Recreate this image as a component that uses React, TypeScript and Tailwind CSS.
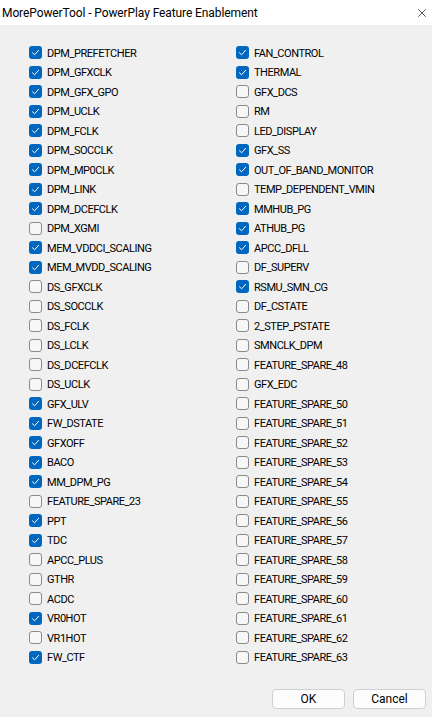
import { X } from "lucide-react"

const leftFeatures: [string, boolean][] = [
  ["DPM_PREFETCHER", true],
  ["DPM_GFXCLK", true],
  ["DPM_GFX_GPO", true],
  ["DPM_UCLK", true],
  ["DPM_FCLK", true],
  ["DPM_SOCCLK", true],
  ["DPM_MP0CLK", true],
  ["DPM_LINK", true],
  ["DPM_DCEFCLK", true],
  ["DPM_XGMI", false],
  ["MEM_VDDCI_SCALING", true],
  ["MEM_MVDD_SCALING", true],
  ["DS_GFXCLK", false],
  ["DS_SOCCLK", false],
  ["DS_FCLK", false],
  ["DS_LCLK", false],
  ["DS_DCEFCLK", false],
  ["DS_UCLK", false],
  ["GFX_ULV", true],
  ["FW_DSTATE", true],
  ["GFXOFF", true],
  ["BACO", true],
  ["MM_DPM_PG", true],
  ["FEATURE_SPARE_23", false],
  ["PPT", true],
  ["TDC", true],
  ["APCC_PLUS", false],
  ["GTHR", false],
  ["ACDC", false],
  ["VR0HOT", true],
  ["VR1HOT", false],
  ["FW_CTF", true],
]

const rightFeatures: [string, boolean][] = [
  ["FAN_CONTROL", true],
  ["THERMAL", true],
  ["GFX_DCS", false],
  ["RM", false],
  ["LED_DISPLAY", false],
  ["GFX_SS", true],
  ["OUT_OF_BAND_MONITOR", true],
  ["TEMP_DEPENDENT_VMIN", false],
  ["MMHUB_PG", true],
  ["ATHUB_PG", true],
  ["APCC_DFLL", true],
  ["DF_SUPERV", false],
  ["RSMU_SMN_CG", true],
  ["DF_CSTATE", false],
  ["2_STEP_PSTATE", false],
  ["SMNCLK_DPM", false],
  ["FEATURE_SPARE_48", false],
  ["GFX_EDC", false],
  ...Array.from({ length: 14 }, (_, i) => [`FEATURE_SPARE_${50 + i}`, false] as [string, boolean]),
]

function CheckRow({ label, checked }: { label: string; checked: boolean }) {
  return (
    <label className="flex items-center h-[19.5px] gap-[5px]">
      {checked ? (
        <span className="w-[13px] h-[13px] rounded-[3px] bg-[#0067c0] flex items-center justify-center">
          <svg width="9" height="9" viewBox="0 0 9 9" fill="none">
            <path d="M1.5 4.8 L3.6 6.8 L7.6 2.3" stroke="white" strokeWidth="1" strokeLinecap="round" strokeLinejoin="round" />
          </svg>
        </span>
      ) : (
        <span className="w-[13px] h-[13px] rounded-[3px] border border-[#8a8a8a] bg-[#f7f7f7]" />
      )}
      <span className="text-[11px] text-black tracking-[-0.45px] leading-none pt-[1px]">{label}</span>
    </label>
  )
}

export default function App() {
  return (
    <div className="w-[432px] h-[717px] bg-[#f0f0f0] flex flex-col" style={{ fontFamily: "Roboto, 'Liberation Sans', sans-serif" }}>
      {/* Title bar */}
      <div className="h-[25px] bg-white flex items-center justify-between pl-[2px] pr-[3px]">
        <span className="text-[12px] text-black tracking-[-0.1px]">MorePowerTool - PowerPlay Feature Enablement</span>
        <X size={14} strokeWidth={1.1} className="text-black" />
      </div>

      {/* Feature grid */}
      <div className="grid grid-cols-[207px_1fr] pl-[29px] pt-[18px]">
        <div className="flex flex-col">
          {leftFeatures.map(([name, on]) => (
            <CheckRow key={name} label={name} checked={on} />
          ))}
        </div>
        <div className="flex flex-col">
          {rightFeatures.map(([name, on]) => (
            <CheckRow key={name} label={name} checked={on} />
          ))}
        </div>
      </div>

      {/* Buttons */}
      <div className="flex justify-end gap-[8px] pr-[6px] mt-[22px]">
        <button className="w-[73px] h-[20px] bg-[#fdfdfd] border border-[#d0d0d0] rounded-[4px] text-[12px] text-black leading-none">OK</button>
        <button className="w-[73px] h-[20px] bg-[#fdfdfd] border border-[#d0d0d0] rounded-[4px] text-[12px] text-black leading-none">Cancel</button>
      </div>
    </div>
  )
}
